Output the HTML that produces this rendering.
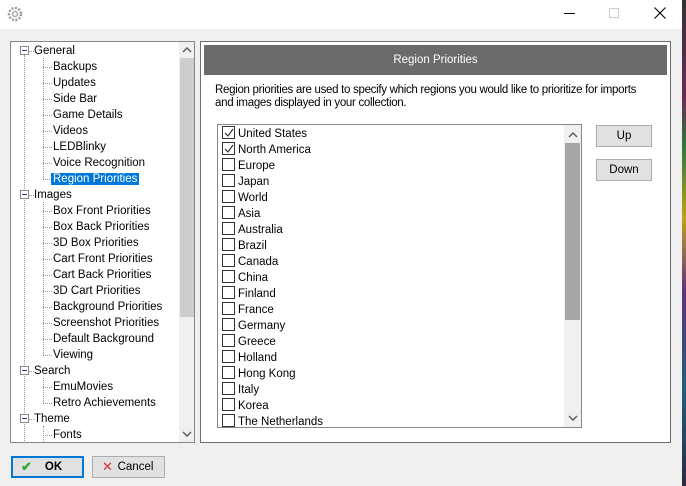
<!DOCTYPE html>
<html><head><style>
*{margin:0;padding:0;box-sizing:border-box}
body{width:686px;height:486px;background:#f0f0f0;font-family:"Liberation Sans",sans-serif;font-size:11.5px;color:#000;position:relative;overflow:hidden}
.abs{position:absolute}
.tb{left:0;top:0;width:682px;height:29px;background:#fff}
.desk{left:682px;top:0;width:4px;height:486px;background:linear-gradient(#333,#6a2a5a 20%,#2a7a3a 30%,#c0a020 45%,#603080 60%,#206080 80%,#2a2a40)}
.tree{left:10px;top:41px;width:185px;height:402px;background:#fff;border:1px solid #828790;overflow:hidden}
.ti{position:absolute;white-space:nowrap;line-height:16px}
.exp{position:absolute;width:9px;height:9px;border:1px solid #8a8a8a;background:#fff}
.exp:after{content:"";position:absolute;left:1px;top:3px;width:5px;height:1px;background:#1e3a8a}
.vd{position:absolute;border-left:1px dotted #999}
.hd{position:absolute;border-top:1px dotted #999}
.sel{background:#0078d7;color:#fff;padding:0 2px;margin-left:-2px}
.panel{left:200px;top:41px;width:471px;height:402px;background:#fff;border:1px solid #6e6e6e}
.hdr{left:204px;top:45px;width:463px;height:30px;background:#6b6b6b;color:#fff;text-align:center;line-height:30px}
.list{left:217px;top:124px;width:365px;height:304px;background:#fff;border:1px solid #828790;overflow:hidden}
.row{position:absolute;left:4px;height:16px;line-height:16px;white-space:nowrap}
.cb{display:inline-block;width:13px;height:13px;border:1px solid #333;vertical-align:-2px;margin-right:3px;position:relative;background:#fff}
.btn{background:#e1e1e1;border:1px solid #adadad;text-align:center}
</style></head><body>
<div class="abs tb"></div>
<svg class="abs" style="left:7px;top:6px" width="16" height="16" viewBox="0 0 16 16"><circle cx="8" cy="8" r="6" fill="none" stroke="#999" stroke-width="2.5" stroke-dasharray="2 1.5"/><circle cx="8" cy="8" r="2.5" fill="none" stroke="#aaa" stroke-width="1.5"/></svg>
<div class="abs" style="left:564px;top:13px;width:11px;height:1px;background:#000"></div>
<div class="abs" style="left:609px;top:8px;width:10px;height:10px;border:1px solid #ccc"></div>
<svg class="abs" style="left:654px;top:7px" width="12" height="12"><path d="M0.5 0.5L11.5 11.5M11.5 0.5L0.5 11.5" stroke="#000" stroke-width="1.1"/></svg>
<div class="abs desk"></div>

<div class="abs tree">
<div class="vd" style="left:13px;top:13px;height:390px"></div>
<div class="vd" style="left:32px;top:16px;height:121px"></div>
<div class="vd" style="left:32px;top:160px;height:153px"></div>
<div class="vd" style="left:32px;top:336px;height:25px"></div>
<div class="vd" style="left:32px;top:384px;height:20px"></div>
<div style="position:absolute;left:168px;top:0;width:16px;height:400px;background:#f0f0f0"></div>
<div style="position:absolute;left:169px;top:16px;width:14px;height:259px;background:#cdcdcd"></div>
<svg style="position:absolute;left:171px;top:5px" width="10" height="6"><path d="M1 5L5 1L9 5" fill="none" stroke="#606060" stroke-width="1.5"/></svg>
<svg style="position:absolute;left:171px;top:389px" width="10" height="6"><path d="M1 1L5 5L9 1" fill="none" stroke="#606060" stroke-width="1.5"/></svg>
<div id="tr"></div>
</div>

<div class="abs panel"></div>
<div class="abs hdr">Region Priorities</div>
<div class="abs" style="left:215px;top:84px;line-height:13px;white-space:nowrap;letter-spacing:-0.3px">Region priorities are used to specify which regions you would like to prioritize for imports<br>and images displayed in your collection.</div>
<div class="abs list">
<div style="position:absolute;left:346px;top:0;width:17px;height:302px;background:#f0f0f0"></div>
<div style="position:absolute;left:347px;top:18px;width:15px;height:177px;background:#a6a6a6"></div>
<svg style="position:absolute;left:350px;top:7px" width="10" height="6"><path d="M1 5L5 1L9 5" fill="none" stroke="#606060" stroke-width="1.5"/></svg>
<svg style="position:absolute;left:350px;top:290px" width="10" height="6"><path d="M1 1L5 5L9 1" fill="none" stroke="#606060" stroke-width="1.5"/></svg>
<div id="ls"></div>
</div>
<div class="abs btn" style="left:596px;top:125px;width:56px;height:22px;line-height:20px">Up</div>
<div class="abs btn" style="left:596px;top:159px;width:56px;height:22px;line-height:20px">Down</div>
<div class="abs btn" style="left:11px;top:456px;width:73px;height:22px;border:2px solid #0078d7;line-height:18px;font-weight:bold;padding-left:12px"><span style="color:#3a3;position:absolute;left:8px;font-size:13px">✔</span>OK</div>
<div class="abs btn" style="left:92px;top:456px;width:73px;height:22px;line-height:20px;padding-left:14px"><span style="color:#e03030;position:absolute;left:9px;font-size:13px">✕</span>Cancel</div>

<script>
var t=[[0,"General"],[1,"Backups"],[1,"Updates"],[1,"Side Bar"],[1,"Game Details"],[1,"Videos"],[1,"LEDBlinky"],[1,"Voice Recognition"],[1,"Region Priorities",1],[0,"Images"],[1,"Box Front Priorities"],[1,"Box Back Priorities"],[1,"3D Box Priorities"],[1,"Cart Front Priorities"],[1,"Cart Back Priorities"],[1,"3D Cart Priorities"],[1,"Background Priorities"],[1,"Screenshot Priorities"],[1,"Default Background"],[1,"Viewing"],[0,"Search"],[1,"EmuMovies"],[1,"Retro Achievements"],[0,"Theme"],[1,"Fonts"]];
var h="";t.forEach(function(r,i){var y=1+i*16;
if(r[0]==0){h+='<div class="exp" style="left:9px;top:'+(y+3)+'px"></div><div class="hd" style="left:18px;top:'+(y+8)+'px;width:5px"></div><div class="ti" style="left:23px;top:'+y+'px">'+r[1]+'</div>';}
else{h+='<div class="hd" style="left:32px;top:'+(y+8)+'px;width:9px"></div><div class="ti" style="left:42px;top:'+y+'px"><span'+(r[2]?' class="sel"':'')+'>'+r[1]+'</span></div>';}});
document.getElementById("tr").innerHTML=h;
var l=["United States","North America","Europe","Japan","World","Asia","Australia","Brazil","Canada","China","Finland","France","Germany","Greece","Holland","Hong Kong","Italy","Korea","The Netherlands"];
h="";l.forEach(function(n,i){h+='<div class="row" style="top:'+(1+i*16)+'px"><span class="cb">'+(i<2?'<svg style="position:absolute;left:1px;top:1px" width="10" height="10"><path d="M1 5L4 8L9 1" fill="none" stroke="#333" stroke-width="1.2"/></svg>':'')+'</span>'+n+'</div>';});
document.getElementById("ls").innerHTML=h;
</script>
</body></html>
